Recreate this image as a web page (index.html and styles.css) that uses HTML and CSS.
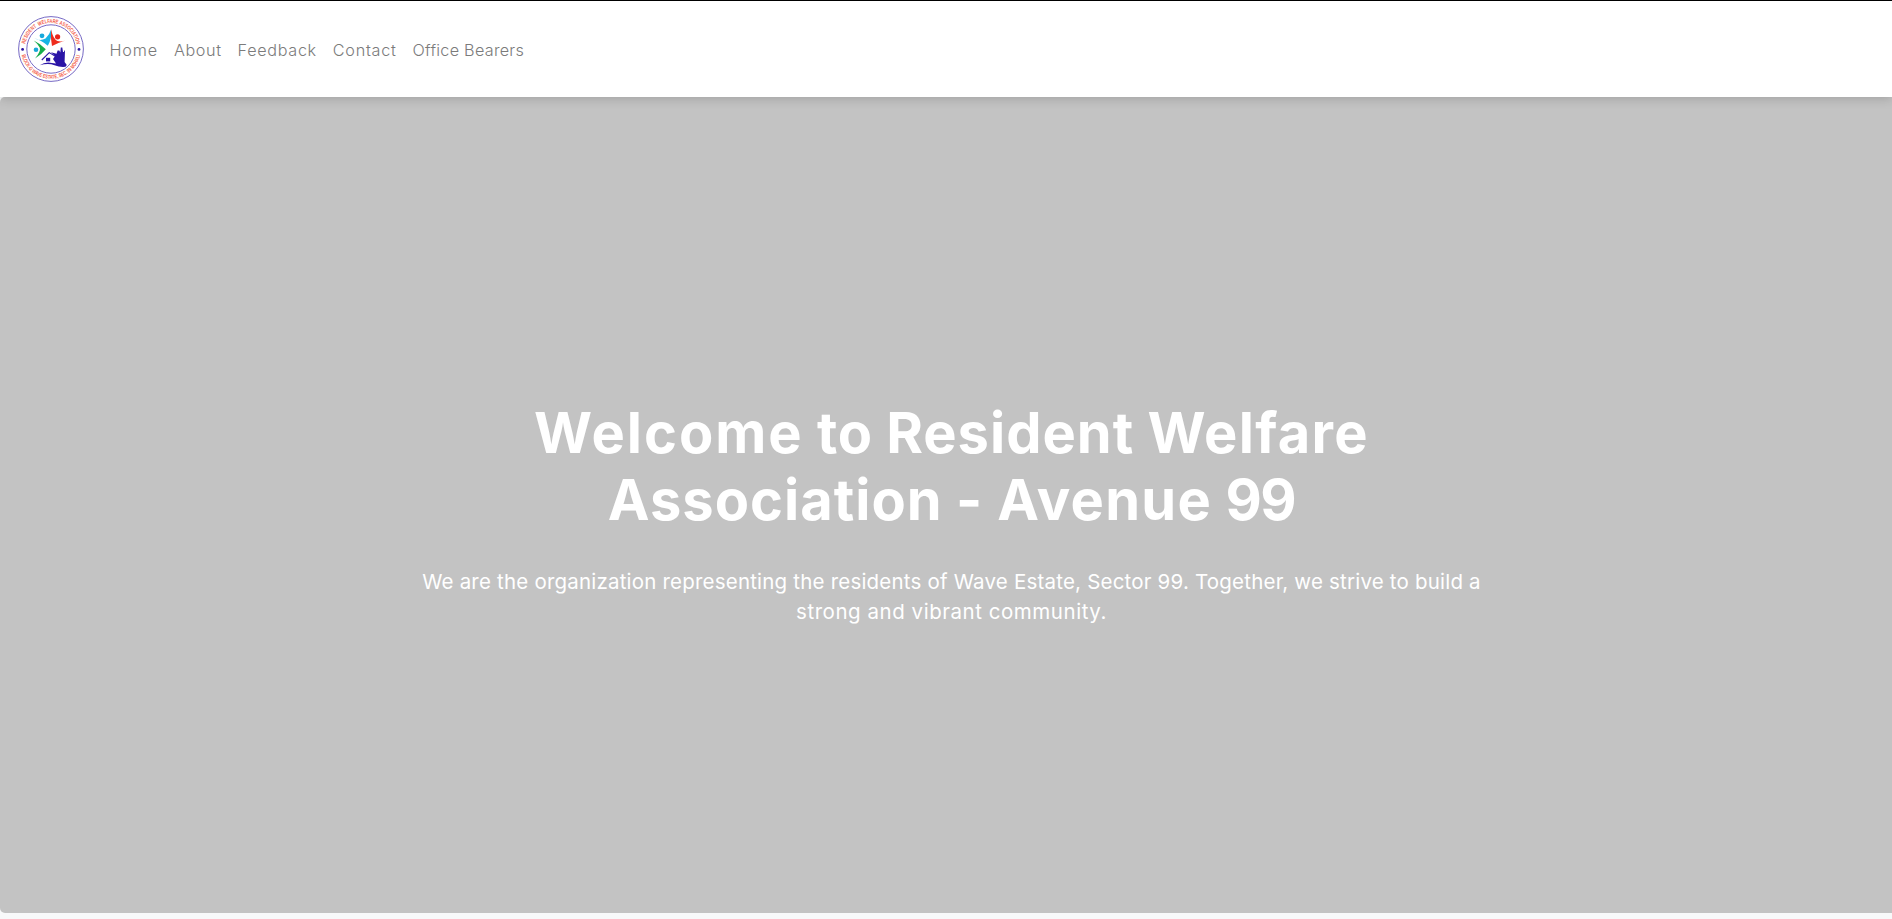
FILE: index.html
```
<!DOCTYPE html>
<html lang="en">
<head>
<meta charset="utf-8">
<title>Resident Welfare Association - Avenue 99</title>
<link rel="stylesheet" href="styles.css">
</head>
<body>
<header class="navbar">
  <a class="brand" href="#">
    <svg class="logo" viewBox="0 0 66 66" role="img" aria-label="Resident Welfare Association">
      <defs>
        <path id="arc-top" d="M6.9 33a26.1 26.1 0 0 1 52.2 0"/>
        <path id="arc-bottom" d="M3.2 33a29.8 29.8 0 0 0 59.6 0"/>
      </defs>
      <circle cx="33" cy="33" r="32.4" fill="#fff" stroke="#6658bd" stroke-width=".9"/>
      <circle cx="33" cy="33" r="24.2" fill="none" stroke="#6658bd" stroke-width=".9"/>
      <text class="logo-text"><textPath href="#arc-top" startOffset="5" textLength="72" lengthAdjust="spacingAndGlyphs">RESIDENT&#160; WELFARE ASSOCIATION</textPath></text>
      <text class="logo-text"><textPath href="#arc-bottom" startOffset="6" textLength="81" lengthAdjust="spacingAndGlyphs">BLOCK-G WAVE ESTATE, SEC. 99 MOHALI</textPath></text>
      <circle cx="4.6" cy="33.4" r="1.4" fill="#2a16a0"/>
      <circle cx="61" cy="33.4" r="1.4" fill="#2a16a0"/>
      <circle cx="24" cy="19.8" r="2.4" fill="#18a9dc"/>
      <path d="M16.2 22Q22 25.5 27.5 22.5Q31.5 19 33.2 13.2Q34 23 29.8 29.8Q24 24.5 16.2 22Z" fill="#18b4e4"/>
      <circle cx="39.6" cy="20.8" r="2.6" fill="#e8251b"/>
      <path d="M33.2 13.5Q35 23 39.5 25Q43 26 47.3 24.5Q39.5 27 34 30Q32.2 22 33.2 13.5Z" fill="#ee2c1d"/>
      <circle cx="18" cy="33.8" r="2.3" fill="#17a8d8"/>
      <path d="M15.7 24.5Q23 28 27.8 33.2Q24 38 17 42.5Q23 35.5 21.8 31.8Q20 28 15.7 24.5Z" fill="#16ad4c"/>
      <path d="M23.8 44L31.2 36.6L39.5 41.5" fill="none" stroke="#2a14a6" stroke-width="1.1"/>
      <path d="M33 36.2L38.5 37.8L39.6 34.5L41.3 34.5L42.3 36.5L42.8 31.4L44.3 31.4L45 36L46 36L46.3 34.5L47 34.5L46.6 46L48.8 49L47.5 50.8Q42 51.5 36.5 49.2Q30 47 21.8 49.3Q27 45.6 34 47L38 47.5L35 43L37 40Z" fill="#2a14a6"/>
      <path d="M28 41.8h4.2v3.6h-4.2z" fill="#2a14a6"/>
    </svg>
  </a>
  <nav class="nav-links">
    <a class="home" href="#">Home</a>
    <a class="about" href="#">About</a>
    <a class="feedback" href="#">Feedback</a>
    <a class="contact" href="#">Contact</a>
    <a class="office" href="#">Office Bearers</a>
  </nav>
</header>
<main class="hero">
  <h1><span class="loosest">Welcome</span> <span class="tight">to</span> <span class="medium">Resident</span> <span class="loose">Welfare</span><br><span class="medium">Association</span> <span class="loosest">-</span> <span class="loose">Avenue</span> <span class="numeral">99</span></h1>
  <p><span class="lead-first">We are the organization representing the residents of Wave Estate, Sector 99. Together, we strive to build a</span><br><span class="lead-last">strong and vibrant community.</span></p>
</main>
</body>
</html>
```
FILE: styles.css
```
* { box-sizing: border-box; }
body { margin: 0; background: #f8f9fa; font-family: Inter, sans-serif; overflow: hidden; }
.navbar { position: relative; z-index: 1; display: flex; align-items: center; height: 97px; padding-left: 18px; background: #fff; border-top: 1px solid #000; box-shadow: 0 2px 10px rgba(0,0,0,.17); }
.brand { display: flex; }
.logo { width: 66px; height: 66px; }
.logo-text { font-family: "Liberation Sans", sans-serif; font-size: 5.6px; font-weight: 700; fill: #f4624c; }
.nav-links { display: flex; gap: 16px; margin-left: 25.5px; padding-top: 1px; }
.nav-links a { color: #7b7b7b; font-size: 16.2px; font-weight: 300; line-height: 24px; text-decoration: none; white-space: nowrap; }
.nav-links .home { letter-spacing: .85px; }
.nav-links .about { letter-spacing: .6px; }
.nav-links .feedback { letter-spacing: .68px; }
.nav-links .contact { letter-spacing: .72px; }
.nav-links .office { letter-spacing: .27px; }
.hero { width: 1903px; height: 816px; padding-top: 303px; border-radius: 5px; background: #c3c3c3; color: #fff; text-align: center; }
h1 { margin: 0 0 33px; font-size: 56px; font-weight: 700; line-height: 67px; }
h1 .loosest { letter-spacing: 2px; }
h1 .loose { letter-spacing: 1.3px; }
h1 .medium { letter-spacing: 1px; }
h1 .tight { letter-spacing: .8px; }
h1 .numeral { letter-spacing: -1.5px; }
p { margin: 0; font-size: 20.5px; line-height: 30px; }
.lead-first { letter-spacing: .2px; }
.lead-last { letter-spacing: .54px; }
```
